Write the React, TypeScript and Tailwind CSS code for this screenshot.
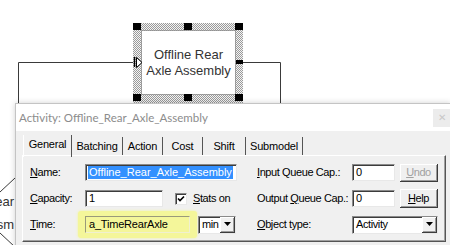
import React from "react";

const ui = { fontFamily: '"Liberation Sans", Arial, sans-serif' };

const U = ({ c }: { c: string }) => <span className="underline underline-offset-[1px]">{c}</span>;

const sunken =
  "bg-white border-t border-l border-[#8a8a8a] border-b border-r border-b-[#e8e8e8] border-r-[#e8e8e8] shadow-[inset_1px_1px_0_#3c3c3c]";
const raised =
  "bg-[#f0f0f0] border-r border-b border-[#3c3c3c] shadow-[inset_1px_1px_0_#ffffff,inset_-1px_-1px_0_#9a9a9a]";

const Arrow = () => (
  <div className={`${raised} w-[15px] h-full flex items-center justify-center`}>
    <svg width="7" height="4" viewBox="0 0 7 4">
      <path d="M0 0h7L3.5 4z" fill="#000" />
    </svg>
  </div>
);

const Diagram = () => (
  <>
    <svg className="absolute left-0 top-0" width="450" height="245">
      <defs>
        <pattern id="hatch" width="2" height="2" patternUnits="userSpaceOnUse">
          <rect width="2" height="2" fill="#f4f4f4" />
          <rect width="1" height="1" fill="#9a9a9a" />
          <rect x="1" y="1" width="1" height="1" fill="#9a9a9a" />
        </pattern>
      </defs>
      <g stroke="#3a3a3a" strokeWidth="1" fill="none">
        <path d="M18.5 62.5H133M18.5 62.5V120" />
        <path d="M243 62.5H280.5V120" />
        <path d="M15 178L0 192M0 233L15 247" />
      </g>
      <rect x="133" y="23" width="110" height="80" fill="url(#hatch)" />
      <rect x="141.5" y="30.5" width="94" height="64" fill="#fff" stroke="#555" strokeDasharray="1 1" />
      {[
        [133, 23],
        [184, 23],
        [235, 23],
        [133, 94],
        [184, 94],
        [235, 94],
      ].map(([x, y], i) => (
        <rect key={i} x={x} y={y} width="8" height="7" fill="#000" />
      ))}
      <path d="M134.5 57V67" stroke="#000" strokeWidth="1.5" />
      <path d="M136.5 57.5L142 62.5L136.5 67.5Z" fill="#fff" stroke="#000" />
      <rect x="236" y="60" width="7" height="4" fill="#000" />
    </svg>
    <div
      className="absolute left-[141px] top-[30px] w-[95px] h-[65px] flex flex-col items-center justify-center text-[13px] leading-[16px] text-[#333]"
      style={ui}
    >
      <span>Offline Rear</span>
      <span>Axle Assembly</span>
    </div>
    <div className="absolute left-0 top-[190px] w-[14px] flex flex-col items-end text-[13px] leading-[23px] text-[#333]" style={ui}>
      <span>ear</span>
      <span>sm</span>
    </div>
  </>
);

const tabs = [
  { label: "General", w: "w-[49px]" },
  { label: "Batching", w: "w-[51px]" },
  { label: "Action", w: "w-[40px]" },
  { label: "Cost", w: "w-[40px]" },
  { label: "Shift", w: "w-[43px]" },
  { label: "Submodel", w: "w-[57px]" },
];

const Dialog = () => (
  <div
    className="absolute left-[15px] top-[103px] w-[436px] h-[150px] border border-r-0 border-[#c4c4c4] shadow-[0_0_6px_rgba(0,0,0,0.18)] flex flex-col"
    style={ui}
  >
    {/* title bar */}
    <div className="h-[27px] bg-white flex items-center justify-between">
      <span className="pl-[3px] text-[11.5px] text-[#8c8c8c]" style={{ fontFamily: 'Lato, "Noto Sans", sans-serif' }}>
        Activity: Offline_Rear_Axle_Assembly
      </span>
      <div className="w-[18px] h-[18px] bg-[#ececec] flex items-center justify-center text-[10px] text-[#c8c8c8]">
        ✕
      </div>
    </div>

    {/* body */}
    <div className="flex-1 bg-[#f0f0f0] pl-[6px] pt-[4px] text-[11px] tracking-[-0.4px] text-black">
      <div className="flex items-end h-[20px] pl-[1px] tracking-[-0.2px]">
        {tabs.map((t, i) => (
          <div
            key={t.label}
            className={`${t.w} flex items-center justify-center border-r border-[#555] ${
              i === 0 ? "h-[22px] relative top-[2px] pb-[3px] border-l border-l-white" : "h-[18px]"
            }`}
          >
            {t.label}
          </div>
        ))}
      </div>

      {/* panel */}
      <div className="w-[424px] h-[87px] border-t border-l border-white border-r border-b border-r-[#555] border-b-[#555] shadow-[inset_-1px_-1px_0_#a0a0a0] flex pl-[7px] pt-[8px]">
        {/* left column */}
        <div className="w-[227px] flex flex-col gap-[9px]">
          <div className="flex items-center h-[17px]">
            <span className="w-[55px]">
              <U c="N" />
              ame:
            </span>
            <div className={`${sunken} w-[152px] h-[17px] flex items-center pl-[2px] tracking-normal`}>
              <span className="bg-[#3390ff] text-white leading-[13px] px-[1px]">Offline_Rear_Axle_Assembly</span>
            </div>
          </div>
          <div className="flex items-center h-[17px]">
            <span className="w-[55px]">
              <U c="C" />
              apacity:
            </span>
            <div className={`${sunken} w-[78px] h-[17px] flex items-center pl-[3px]`}>1</div>
            <div className={`${sunken} ml-[12px] w-[12px] h-[12px] flex items-center justify-center`}>
              <svg width="8" height="8" viewBox="0 0 8 8">
                <path d="M1 3.5L3 5.5L7 1.5" stroke="#000" strokeWidth="1.6" fill="none" />
              </svg>
            </div>
            <span className="ml-[6px]">
              <U c="S" />
              tats on
            </span>
          </div>
          <div className="flex items-center h-[17px]">
            <span className="w-[48px]">
              <U c="T" />
              ime:
            </span>
            <div className="bg-[#f4f69a] rounded-[3px] px-[7px] py-[5px] -my-[5px] shadow-[0_0_3px_#f4f69a]">
              <div className="border-t border-l border-[#9a9a7a] border-b border-r border-b-[#f0f0d0] border-r-[#f0f0d0] w-[105px] h-[17px] flex items-center pl-[3px] tracking-[-0.2px]">
                a_TimeRearAxle
              </div>
            </div>
            <div className={`${sunken} ml-[1px] w-[38px] h-[18px] flex items-center justify-between pl-[3px]`}>
              <span>min</span>
              <Arrow />
            </div>
          </div>
        </div>

        {/* right column */}
        <div className="flex flex-col gap-[9px]">
          <div className="flex items-center h-[17px]">
            <span className="w-[95px]">
              <U c="I" />
              nput Queue Cap.:
            </span>
            <div className={`${sunken} w-[43px] h-[17px] flex items-center pl-[3px]`}>0</div>
            <div className={`${raised} ml-[5px] w-[38px] h-[18px] flex items-center justify-center text-[#a0a0a0]`}>
              <span>
                <U c="U" />
                ndo
              </span>
            </div>
          </div>
          <div className="flex items-center h-[17px]">
            <span className="w-[95px] whitespace-nowrap">
              Output <U c="Q" />
              ueue Cap.:
            </span>
            <div className={`${sunken} w-[43px] h-[17px] flex items-center pl-[3px]`}>0</div>
            <div className={`${raised} ml-[5px] w-[38px] h-[19px] flex items-center justify-center`}>
              <span>
                <U c="H" />
                elp
              </span>
            </div>
          </div>
          <div className="flex items-center h-[17px]">
            <span className="w-[95px]">
              <U c="O" />
              bject type:
            </span>
            <div className={`${sunken} w-[86px] h-[18px] flex items-center justify-between pl-[3px]`}>
              <span>Activity</span>
              <Arrow />
            </div>
          </div>
        </div>
      </div>
    </div>
  </div>
);

export default function App() {
  return (
    <div className="relative w-[450px] h-[245px] overflow-hidden bg-white">
      <Diagram />
      <Dialog />
    </div>
  );
}
